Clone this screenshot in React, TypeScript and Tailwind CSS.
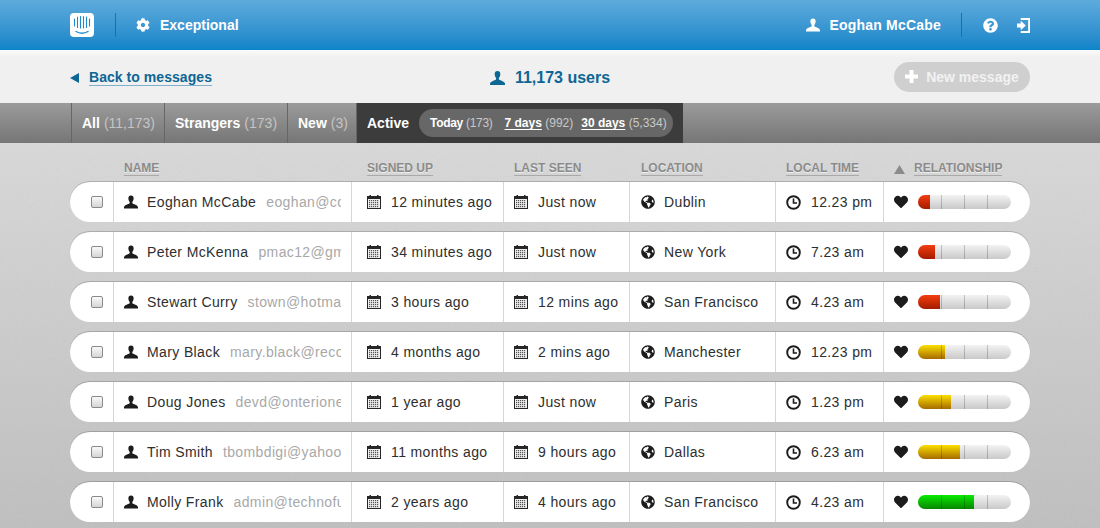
import React from "react";
import { FaCog, FaQuestionCircle, FaGlobeAmericas, FaHeart } from "react-icons/fa";

const F = "font-['Liberation_Sans',Arial,sans-serif]";

function User({ className }: { className?: string }) {
  return (
    <svg viewBox="0 0 16 15" className={className} fill="currentColor">
      <path d="M8 0C5.900 0 5 1.400 5 3.300c0 1.600.5 3.200 1.300 4 .4.400.3 1.600-.2 2C5.200 10 1 10.800 0 13.200V15h16v-1.800c-1-2.400-5.200-3.200-6.100-3.900-.5-.4-.6-1.600-.2-2 .8-.8 1.300-2.400 1.300-4C11 1.400 10.100 0 8 0z" />
    </svg>
  );
}

function Calendar() {
  return (
    <svg viewBox="0 0 14 14" className="w-[14px] h-[14px] shrink-0">
      <rect x="0.5" y="1.500" width="13" height="12" fill="#f0f0f0" stroke="#262626" />
      <rect x="1" y="1.500" width="12" height="2.500" fill="#262626" />
      <rect x="2.500" y="0" width="1.500" height="3" fill="#262626" />
      <rect x="10" y="0" width="1.500" height="3" fill="#262626" />
      <g fill="#555">
        {[5, 7, 9, 11].map((y) =>
          [2, 4, 6, 8, 10].map((x) => <rect key={`${x}-${y}`} x={x} y={y} width="1.200" height="1.200" />)
        )}
      </g>
    </svg>
  );
}

function Clock() {
  return (
    <svg viewBox="0 0 15 15" className="w-[15px] h-[15px] shrink-0 text-[#1c1c1c]" fill="none" stroke="currentColor">
      <circle cx="7.500" cy="7.500" r="6.300" strokeWidth="1.900" />
      <path d="M7.500 3.500V8H11" strokeWidth="1.600" />
    </svg>
  );
}

function SignIn() {
  return (
    <svg viewBox="0 0 14 16" className="w-[13px] h-[15px]" fill="#fff">
      <path d="M4 0h10v16H4v-2h8V2H4z" />
      <path d="M0 5.800h4V2.800L9.500 8 4 13.200v-3H0z" />
    </svg>
  );
}

function Plus() {
  return (
    <svg viewBox="0 0 13 13" className="w-[13px] h-[13px]" fill="#fff">
      <path d="M4.500 0h4v4.500H13v4H8.500V13h-4V8.500H0v-4h4.500z" />
    </svg>
  );
}

function Logo() {
  return (
    <svg viewBox="0 0 24 24" className="w-6 h-6">
      <rect width="24" height="24" rx="4" fill="#fff" />
      <g stroke="#1d8acb" strokeWidth="1.100" strokeLinecap="round" fill="none">
        <path d="M4.500 6v7M7.500 4v10.500M10.500 3.500v11.500M13.500 3.500v11.500M16.500 4v10.500M19.500 6v7" />
        <path d="M6 18.500c3.500 2 8.500 2 12 0" strokeWidth="1.400" />
      </g>
    </svg>
  );
}

function Bar({ width, tone }: { width: number; tone: "red" | "yellow" | "green" }) {
  const fill =
    tone === "red"
      ? "bg-gradient-to-b from-[#f53d10] to-[#a31b00]"
      : tone === "yellow"
      ? "bg-gradient-to-b from-[#fbe000] to-[#a56c00]"
      : "bg-gradient-to-b from-[#0aec00] to-[#078600]";
  return (
    <div className="relative w-[93px] h-[14px] rounded-full overflow-hidden bg-gradient-to-b from-[#f3f3f3] to-[#c9c9c9]">
      <div className={`absolute left-0 top-0 bottom-0 ${fill}`} style={{ width }} />
      <div className="absolute left-[23px] top-0 bottom-0 w-px bg-black/20" />
      <div className="absolute left-[46px] top-0 bottom-0 w-px bg-black/20" />
      <div className="absolute left-[69px] top-0 bottom-0 w-px bg-black/20" />
    </div>
  );
}

const rows = [
  { name: "Eoghan McCabe", email: "eoghan@co", up: "12 minutes ago", seen: "Just now", loc: "Dublin", time: "12.23 pm", w: 12, tone: "red" },
  { name: "Peter McKenna", email: "pmac12@gm", up: "34 minutes ago", seen: "Just now", loc: "New York", time: "7.23 am", w: 17, tone: "red" },
  { name: "Stewart Curry", email: "stown@hotmai", up: "3 hours ago", seen: "12 mins ago", loc: "San Francisco", time: "4.23 am", w: 22, tone: "red" },
  { name: "Mary Black", email: "mary.black@reco", up: "4 months ago", seen: "2 mins ago", loc: "Manchester", time: "12.23 pm", w: 27, tone: "yellow" },
  { name: "Doug Jones", email: "devd@onterione", up: "1 year ago", seen: "Just now", loc: "Paris", time: "1.23 pm", w: 33, tone: "yellow" },
  { name: "Tim Smith", email: "tbombdigi@yahoo", up: "11 months ago", seen: "9 hours ago", loc: "Dallas", time: "6.23 am", w: 42, tone: "yellow" },
  { name: "Molly Frank", email: "admin@technofu", up: "2 years ago", seen: "4 hours ago", loc: "San Francisco", time: "4.23 am", w: 56, tone: "green" },
] as const;

const cols = "grid grid-cols-[43px_238px_152px_126px_146px_108px_147px]";
const cell = "flex items-center h-full border-l border-[#d6d6d6] text-[14px] tracking-[0.38px] text-[#2e2e2e]";
const th = "block border-b border-[#a9a9a9] text-[12px] leading-[13px] font-bold text-[#8b8b8b] [text-shadow:0_1px_0_rgba(255,255,255,0.6)]";

function Tab({ label, count, className }: { label: string; count: string; className: string }) {
  return (
    <div className={`h-full flex items-center pl-[10px] border-r border-[#666] text-[14px] font-bold text-white whitespace-nowrap ${className}`}>
      {label}
      <span className="font-normal text-[#c4c4c4] ml-[4px]">{count}</span>
    </div>
  );
}

export default function App() {
  return (
    <div className={`${F} w-[1100px] h-[528px] overflow-hidden flex flex-col`}>
      <header className="h-[50px] shrink-0 px-[70px] flex items-center bg-gradient-to-b from-[#5dabdc] to-[#0a84c8] text-white font-bold text-[14px]">
        <Logo />
        <div className="w-px h-6 bg-[#1273ad] ml-[21px] mr-[20px]" />
        <FaCog className="w-[14px] h-[14px]" />
        <span className="ml-[10px]">Exceptional</span>
        <div className="ml-auto flex items-center">
          <User className="w-[14px] h-[14px]" />
          <span className="ml-[9px] tracking-[0.2px]">Eoghan McCabe</span>
          <div className="w-px h-6 bg-[#1273ad] ml-[20px] mr-[21px]" />
          <FaQuestionCircle className="w-[15px] h-[15px]" />
          <div className="ml-[19px]">
            <SignIn />
          </div>
        </div>
      </header>

      <div className="h-[53px] shrink-0 px-[70px] flex items-center justify-between bg-gradient-to-b from-[#fafafa] from-0% via-[#f0f0f0] via-15% to-[#f0f0f0]">
        <div className="w-[300px] flex items-center text-[#0e6694] pt-[2px]">
          <svg viewBox="0 0 9 10" className="w-[9px] h-[10px]" fill="currentColor">
            <path d="M9 0v10L0 5z" />
          </svg>
          <a className="ml-[10px] font-bold text-[14px] tracking-[0.05px] border-b border-[#7fb0cb] leading-[15px]">Back to messages</a>
        </div>
        <div className="flex items-center text-[#0e6694] font-bold text-[16px] pt-[2px]">
          <User className="w-[15px] h-[14px]" />
          <span className="ml-[10px]">11,173 users</span>
        </div>
        <div className="w-[300px] flex justify-end">
          <div className="w-[136px] h-[30px] rounded-full bg-[#cfcfcf] flex items-center justify-center font-bold text-[14px]">
            <Plus />
            <span className="ml-[8px] pt-[1px] text-[#f2f2f2]">New message</span>
          </div>
        </div>
      </div>

      <nav className="h-[40px] shrink-0 px-[71px] flex items-center bg-gradient-to-b from-[#9b9b9b] to-[#767676]">
        <div className="h-full w-px bg-[#666]" />
        <Tab label="All" count="(11,173)" className="w-[93px]" />
        <Tab label="Strangers" count="(173)" className="w-[123px]" />
        <Tab label="New" count="(3)" className="w-[69px]" />
        <div className="h-full flex items-center bg-[#3c3c3c] w-[326px] text-white">
          <span className="ml-[10px] font-bold text-[14px]">Active</span>
          <div className="ml-[10px] h-[28px] w-[254px] rounded-full bg-[#676767] flex items-center pl-[11px] text-[12px] font-bold whitespace-nowrap">
            <span className="tracking-[-0.3px]">Today <span className="font-normal text-[#c9c9c9]">(173)</span></span>
            <span className="ml-[12px]"><span className="underline underline-offset-2">7 days</span> <span className="font-normal text-[#c9c9c9]">(992)</span></span>
            <span className="ml-[8px]"><span className="underline underline-offset-2">30 days</span> <span className="font-normal text-[#c9c9c9]">(5,334)</span></span>
          </div>
        </div>
      </nav>

      <main className="relative flex-1 px-[70px] bg-gradient-to-b from-[#d9d9d9] to-[#bfbfbf]">
        <svg className="absolute inset-0 w-full h-full opacity-[0.12]" aria-hidden="true">
          <filter id="grain">
            <feTurbulence type="fractalNoise" baseFrequency="0.9" numOctaves="2" stitchTiles="stitch" />
            <feColorMatrix type="saturate" values="0" />
          </filter>
          <rect width="100%" height="100%" filter="url(#grain)" />
        </svg>
        <div className="relative">
          <div className={`${cols} h-[39px] items-end pb-[6px]`}>
            <div />
            <div className="flex pl-[11px]"><span className={th}>NAME</span></div>
            <div className="flex pl-[16px]"><span className={th}>SIGNED UP</span></div>
            <div className="flex pl-[11px]"><span className={th}>LAST SEEN</span></div>
            <div className="flex pl-[12px]"><span className={th}>LOCATION</span></div>
            <div className="flex pl-[11px]"><span className={th}>LOCAL TIME</span></div>
            <div className="flex pl-[11px] items-center">
              <svg viewBox="0 0 11 9" className="w-[11px] h-[9px] text-[#8b8b8b]" fill="currentColor">
                <path d="M5.500 0L11 9H0z" />
              </svg>
              <span className={`${th} ml-[9px]`}>RELATIONSHIP</span>
            </div>
          </div>
          <div className="flex flex-col gap-[10px]">
            {rows.map((r) => (
              <div key={r.name} className={`${cols} h-[40px] bg-white rounded-[20px] shadow-[0_-1px_0_rgba(0,0,0,0.18)]`}>
                <div className="flex items-center h-full pl-[21px]">
                  <div className="w-[12px] h-[12px] rounded-[2px] border border-[#8a8a8a] bg-gradient-to-b from-[#fafafa] to-[#d5d5d5]" />
                </div>
                <div className={`${cell} pl-[10px] pr-[10px]`}>
                  <User className="w-[14px] h-[14px] shrink-0 text-[#1c1c1c]" />
                  <span className="ml-[9px] whitespace-nowrap">{r.name}</span>
                  <span className="ml-[10px] whitespace-nowrap overflow-hidden flex-1 min-w-0 text-[#a8a8a8]">{r.email}</span>
                </div>
                <div className={`${cell} pl-[15px]`}>
                  <Calendar />
                  <span className="ml-[10px]">{r.up}</span>
                </div>
                <div className={`${cell} pl-[10px]`}>
                  <Calendar />
                  <span className="ml-[10px]">{r.seen}</span>
                </div>
                <div className={`${cell} pl-[11px]`}>
                  <FaGlobeAmericas className="w-[14px] h-[14px] text-[#1c1c1c]" />
                  <span className="ml-[9px]">{r.loc}</span>
                </div>
                <div className={`${cell} pl-[10px]`}>
                  <Clock />
                  <span className="ml-[10px]">{r.time}</span>
                </div>
                <div className={`${cell} pl-[10px]`}>
                  <FaHeart className="w-[14px] h-[14px] text-[#1c1c1c]" />
                  <div className="ml-[10px]">
                    <Bar width={r.w} tone={r.tone} />
                  </div>
                </div>
              </div>
            ))}
          </div>
        </div>
      </main>
    </div>
  );
}
